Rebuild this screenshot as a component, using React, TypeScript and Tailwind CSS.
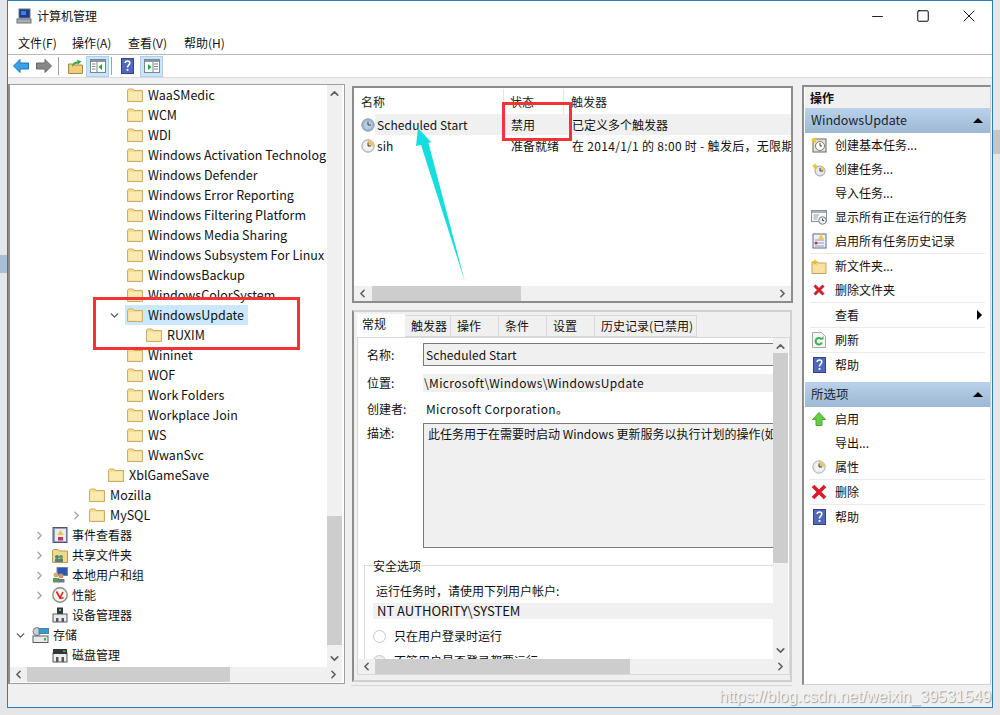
import { ChevronDown, ChevronRight, ChevronUp, ChevronLeft, Minus, Square, X } from "lucide-react";
import type { ReactNode } from "react";

const FONT = "[font-family:'Noto_Sans_CJK_SC','Noto_Sans',sans-serif]";

function Folder() {
  return (
    <svg width="16" height="14" viewBox="0 0 16 14" className="shrink-0">
      <path d="M0.5 2.5 L1.5 1 H6 L7 2.5 H15.5 V13.5 H0.5 Z" fill="#f8dc8e" stroke="#c9ad6c" />
      <path d="M1.5 4 H14.5 V12.5 H1.5 Z" fill="#fbeab0" />
    </svg>
  );
}

function Clock({ face = "#9bb7d2", rim = "#8a9aa8", wedge = false }: { face?: string; rim?: string; wedge?: boolean }) {
  return (
    <svg width="14" height="14" viewBox="0 0 14 14" className="shrink-0">
      <circle cx="7" cy="7" r="6.2" fill={face} stroke={rim} />
      <circle cx="7" cy="7" r="4" fill={wedge ? "#f2f2f2" : "#b8cde0"} />
      {wedge && <path d="M7 1 A6 6 0 0 1 13 7 H7 Z" fill="#e8c878" />}
      <path d="M7 3.5 V7 H10" fill="none" stroke="#444" />
    </svg>
  );
}

function HelpIcon() {
  return (
    <svg width="13" height="16" viewBox="0 0 13 16" className="shrink-0">
      <rect x="0" y="0" width="13" height="16" fill="#3c50a4" stroke="#2a3470" />
      <rect x="1" y="1" width="11" height="14" fill="#5068b8" />
      <path d="M4.2 5 C4.2 2.4 8.8 2.4 8.8 5 C8.8 7 6.5 7 6.5 9.5" fill="none" stroke="#fff" strokeWidth="1.6" />
      <rect x="5.6" y="11" width="1.8" height="1.8" fill="#fff" />
    </svg>
  );
}

function PaneIcon({ mirror = false }: { mirror?: boolean }) {
  return (
    <span className="w-[23px] h-[21px] flex items-center justify-center bg-[#cce4f7] border border-[#a8d2f2]">
      <svg width="16" height="14" viewBox="0 0 16 14">
        <rect x="0.5" y="0.5" width="15" height="13" fill="#fff" stroke="#7a8590" />
        <rect x="1" y="1" width="14" height="2" fill="#8a96a2" />
        {mirror ? (
          <>
            <path d="M4 5 L7.5 8 L4 11 Z" fill="#30a030" />
            <path d="M10 5 H14 M10 7.5 H14 M10 10 H14" stroke="#7a8590" />
            <path d="M9 3 V13" stroke="#7a8590" />
          </>
        ) : (
          <>
            <path d="M12 5 L8.5 8 L12 11 Z" fill="#30a030" />
            <path d="M2 5 H5.5 M2 7.5 H5.5 M2 10 H5.5" stroke="#7a8590" />
            <path d="M7 3 V13" stroke="#7a8590" />
          </>
        )}
      </svg>
    </span>
  );
}

function ComputerIcon() {
  return (
    <svg width="16" height="16" viewBox="0 0 16 16" className="shrink-0">
      <rect x="3" y="1" width="11" height="9" fill="#1d3a8a" stroke="#6a7480" />
      <rect x="5" y="3" width="5" height="4" fill="#3f7fe0" />
      <rect x="1" y="11" width="14" height="4" fill="#a8aeb4" stroke="#6a7480" />
    </svg>
  );
}

function DriveIcon({ led = "#40c040" }: { led?: string }) {
  return (
    <svg width="16" height="16" viewBox="0 0 16 16" className="shrink-0">
      <rect x="1" y="6" width="14" height="9" fill="#eceef0" stroke="#55595e" />
      <rect x="1" y="2" width="14" height="5" fill="#33373c" />
      <rect x="11" y="3.5" width="2.5" height="1.5" fill={led} />
      <rect x="4" y="10" width="2.5" height="5" fill="#55595e" />
      <rect x="9.5" y="10" width="2.5" height="5" fill="#55595e" />
    </svg>
  );
}

function TreeGlyph({ kind }: { kind: string }) {
  if (kind === "event")
    return (
      <svg width="16" height="16" viewBox="0 0 16 16" className="shrink-0">
        <rect x="1" y="0.5" width="14" height="15" fill="#8f9ec4" stroke="#4a5570" />
        <rect x="3" y="2" width="11" height="12" fill="#e8ecf4" />
        <path d="M8.5 3 L11.5 8 H5.5 Z" fill="#f2c530" />
        <rect x="6" y="10" width="5" height="3.5" fill="#c8324a" />
      </svg>
    );
  if (kind === "share")
    return (
      <svg width="16" height="15" viewBox="0 0 16 15" className="shrink-0">
        <path d="M0.5 3 L1.5 1.5 H6 L7 3 H15.5 V14.5 H0.5 Z" fill="#f3d88c" stroke="#b59a5c" />
        <circle cx="5" cy="9" r="2" fill="#4a7f9e" />
        <circle cx="9" cy="9" r="2" fill="#5a9a5a" />
        <rect x="3" y="11" width="8" height="3" fill="#5a7f70" />
      </svg>
    );
  if (kind === "users")
    return (
      <svg width="16" height="16" viewBox="0 0 16 16" className="shrink-0">
        <rect x="5" y="0.5" width="10.5" height="8" fill="#2a58b8" stroke="#7a8590" />
        <circle cx="4" cy="8" r="2.5" fill="#d8a878" />
        <rect x="1" y="11" width="6" height="4.5" fill="#5a9a5a" />
        <circle cx="9" cy="9" r="2.5" fill="#c89868" />
        <rect x="6.5" y="12" width="6" height="3.5" fill="#6a7890" />
      </svg>
    );
  if (kind === "perf")
    return (
      <svg width="16" height="16" viewBox="0 0 16 16" className="shrink-0">
        <circle cx="8" cy="8" r="7.2" fill="#f4f4ef" stroke="#8d8d85" strokeWidth="1.4" />
        <path d="M4.5 4.5 L8 11 L11 5 M8 11 L11.5 11" fill="none" stroke="#d82020" strokeWidth="1.6" />
      </svg>
    );
  if (kind === "device")
    return (
      <svg width="16" height="16" viewBox="0 0 16 16" className="shrink-0">
        <rect x="5" y="0.5" width="6" height="7" fill="#33373c" />
        <rect x="7" y="2" width="2" height="2" fill="#50c050" />
        <rect x="1" y="7" width="14" height="8" fill="#e8eaec" stroke="#55595e" />
        <rect x="4" y="11" width="2.5" height="4" fill="#55595e" />
        <rect x="9.5" y="11" width="2.5" height="4" fill="#55595e" />
      </svg>
    );
  if (kind === "store")
    return (
      <svg width="17" height="16" viewBox="0 0 17 16" className="shrink-0">
        <circle cx="5" cy="4.5" r="4" fill="#c8ced4" stroke="#7a8088" />
        <rect x="7" y="1.5" width="9.5" height="5" fill="#2f9ed0" stroke="#5a7a90" />
        <rect x="1" y="9" width="15" height="6.5" fill="#e8eaec" stroke="#5a5e64" />
        <rect x="12" y="11" width="2" height="2.5" fill="#40b040" />
      </svg>
    );
  return <DriveIcon />;
}

// x is the folder / icon position on the page, ax the chevron's
type TreeRow = { label: string; x: number; arrow?: "right" | "down"; icon?: string; selected?: boolean; ax?: number };

const treeRows: TreeRow[] = [
  { label: "WaaSMedic", x: 127 },
  { label: "WCM", x: 127 },
  { label: "WDI", x: 127 },
  { label: "Windows Activation Technolog", x: 127 },
  { label: "Windows Defender", x: 127 },
  { label: "Windows Error Reporting", x: 127 },
  { label: "Windows Filtering Platform", x: 127 },
  { label: "Windows Media Sharing", x: 127 },
  { label: "Windows Subsystem For Linux", x: 127 },
  { label: "WindowsBackup", x: 127 },
  { label: "WindowsColorSystem", x: 127 },
  { label: "WindowsUpdate", x: 127, arrow: "down", selected: true, ax: 109 },
  { label: "RUXIM", x: 146 },
  { label: "Wininet", x: 127 },
  { label: "WOF", x: 127 },
  { label: "Work Folders", x: 127 },
  { label: "Workplace Join", x: 127 },
  { label: "WS", x: 127 },
  { label: "WwanSvc", x: 127 },
  { label: "XblGameSave", x: 108 },
  { label: "Mozilla", x: 89 },
  { label: "MySQL", x: 89, arrow: "right", ax: 71 },
  { label: "事件查看器", x: 52, arrow: "right", icon: "event", ax: 34 },
  { label: "共享文件夹", x: 52, arrow: "right", icon: "share", ax: 34 },
  { label: "本地用户和组", x: 52, arrow: "right", icon: "users", ax: 34 },
  { label: "性能", x: 52, arrow: "right", icon: "perf", ax: 34 },
  { label: "设备管理器", x: 52, icon: "device" },
  { label: "存储", x: 32, arrow: "down", icon: "store", ax: 15 },
  { label: "磁盘管理", x: 52, icon: "disk" },
];

function Row({ row }: { row: TreeRow }) {
  return (
    <div className="relative h-5 flex items-center" style={{ paddingLeft: row.x - 12 }}>
      {row.arrow === "right" && (
        <ChevronRight size={13} strokeWidth={2.5} className="absolute text-[#a6a6a6]" style={{ left: (row.ax ?? 0) - 11 }} />
      )}
      {row.arrow === "down" && (
        <ChevronDown size={13} strokeWidth={2.5} className="absolute text-[#595959]" style={{ left: (row.ax ?? 0) - 11 }} />
      )}
      <div className={`flex items-center h-5 pl-[2px] pr-[4px] ${row.selected ? "bg-[#cce8ff]" : ""}`}>
        {row.icon ? <TreeGlyph kind={row.icon} /> : <Folder />}
        <span className={`whitespace-nowrap text-[#111] leading-5 ${row.icon ? "ml-[4px] text-[12px]" : "ml-[5px] text-[12.5px]"}`}>
          {row.label}
        </span>
      </div>
    </div>
  );
}

function VBar({ thumbTop, thumbH }: { thumbTop: number; thumbH: number }) {
  return (
    <div className="relative w-[15px] h-full bg-[#f0f0f0] shrink-0">
      <ChevronUp size={13} strokeWidth={3} className="absolute left-[1px] top-[2px] text-[#606060]" />
      <div className="absolute left-0 w-[15px] bg-[#cdcdcd]" style={{ top: thumbTop, height: thumbH }} />
      <ChevronDown size={13} strokeWidth={3} className="absolute left-[1px] bottom-[2px] text-[#606060]" />
    </div>
  );
}

function HBar({ thumbLeft, thumbW }: { thumbLeft: number; thumbW: number }) {
  return (
    <div className="relative h-[15px] bg-[#f0f0f0] shrink-0">
      <ChevronLeft size={13} strokeWidth={3} className="absolute left-[2px] top-[1px] text-[#606060]" />
      <div className="absolute top-0 h-[15px] bg-[#cdcdcd]" style={{ left: thumbLeft, width: thumbW }} />
      <ChevronRight size={13} strokeWidth={3} className="absolute right-[2px] top-[1px] text-[#606060]" />
    </div>
  );
}

type Action = { label: string; icon?: ReactNode; line?: boolean; more?: boolean };

const actionsA: Action[] = [
  {
    label: "创建基本任务...",
    icon: (
      <svg width="16" height="16" viewBox="0 0 16 16">
        <rect x="2" y="2" width="13" height="13" fill="#e8e4d8" stroke="#6a6a60" />
        <circle cx="9" cy="9" r="4.5" fill="#fff" stroke="#7a7a70" />
        <path d="M9 6 V9 H11" fill="none" stroke="#444" />
        <path d="M3 0 L4.2 2 L6.5 2.4 L4.6 4 L5 6 L3 5 L1 6 L1.4 4 L0 2.4 L1.8 2 Z" fill="#f2c530" />
      </svg>
    ),
  },
  {
    label: "创建任务...",
    icon: (
      <svg width="16" height="16" viewBox="0 0 16 16">
        <circle cx="9" cy="10" r="5" fill="#e4e8ec" stroke="#9aa0a8" />
        <path d="M9 5 A5 5 0 0 1 14 10 H9 Z" fill="#eccb80" />
        <path d="M9 7 V10 H12" fill="none" stroke="#444" />
        <path d="M4 2 L5 4 L7 4.4 L5.4 5.8 L5.8 8 L4 7 L2.2 8 L2.6 5.8 L1 4.4 L3 4 Z" fill="#f2c530" />
      </svg>
    ),
  },
  { label: "导入任务..." },
  {
    label: "显示所有正在运行的任务",
    icon: (
      <svg width="16" height="16" viewBox="0 0 16 16">
        <rect x="0.5" y="1.5" width="15" height="11" fill="#f4f6f8" stroke="#8a929a" />
        <rect x="1" y="2" width="14" height="2" fill="#a8b0b8" />
        <path d="M2.5 6 H8 M2.5 8 H7 M2.5 10 H6" stroke="#9aa0a8" />
        <circle cx="11.5" cy="11.5" r="3.8" fill="#e8ecf0" stroke="#7a8088" />
        <path d="M11.5 9.5 V11.5 H13" fill="none" stroke="#444" />
      </svg>
    ),
  },
  {
    label: "启用所有任务历史记录",
    line: true,
    icon: (
      <svg width="16" height="16" viewBox="0 0 16 16">
        <rect x="2" y="1" width="13" height="14" fill="#eef2f8" stroke="#5a6890" />
        <path d="M4 7 H13 M4 10 H13 M4 13 H13" stroke="#8a9ab8" />
        <path d="M10 1 L13 6 H7 Z" fill="#f2d030" />
        <circle cx="5" cy="10" r="1.6" fill="#d03040" />
      </svg>
    ),
  },
  {
    label: "新文件夹...",
    icon: (
      <svg width="16" height="15" viewBox="0 0 16 15">
        <path d="M1 3 H6 L7 4 H15 V14.5 H1 Z" fill="#f8e0a0" stroke="#c0a468" />
        <path d="M4 0 L5 2 L7.2 2.4 L5.5 4 L6 6 L4 5 L2 6 L2.5 4 L0.8 2.4 L3 2 Z" fill="#f2bc20" />
      </svg>
    ),
  },
  {
    label: "删除文件夹",
    line: true,
    icon: (
      <svg width="14" height="14" viewBox="0 0 14 14">
        <path d="M2.5 2.5 L11.5 11.5 M11.5 2.5 L2.5 11.5" stroke="#d02030" strokeWidth="3" />
      </svg>
    ),
  },
  { label: "查看", more: true, line: true },
  {
    label: "刷新",
    line: true,
    icon: (
      <svg width="14" height="16" viewBox="0 0 14 16">
        <path d="M0.5 0.5 H9.5 L13.5 4.5 V15.5 H0.5 Z" fill="#f6f6f6" stroke="#a8a8a8" />
        <path d="M9.5 7.5 A3.2 3.2 0 1 0 9.8 10.5" fill="none" stroke="#40b050" strokeWidth="2" />
        <path d="M8 7.5 H11.5 V4 Z" fill="#40b050" />
      </svg>
    ),
  },
  { label: "帮助", icon: <HelpIcon /> },
];

const actionsB: Action[] = [
  {
    label: "启用",
    icon: (
      <svg width="14" height="14" viewBox="0 0 14 14">
        <path d="M7 0.5 L13.5 7.5 H10 V13.5 H4 V7.5 H0.5 Z" fill="#60d040" stroke="#50a040" />
      </svg>
    ),
  },
  { label: "导出..." },
  {
    label: "属性",
    line: true,
    icon: <Clock face="#e8ecf0" rim="#a8b0b8" wedge />,
  },
  {
    label: "删除",
    line: true,
    icon: (
      <svg width="16" height="16" viewBox="0 0 16 16">
        <path d="M2 2 L14 14 M14 2 L2 14" stroke="#e01828" strokeWidth="3.6" />
      </svg>
    ),
  },
  { label: "帮助", icon: <HelpIcon /> },
];

function ActionRow({ item }: { item: Action }) {
  return (
    <div className={`shrink-0 ${item.line ? "h-[25px]" : "h-[24px]"}`}>
      <div className="relative h-[24px] flex items-center pl-[6px]">
        <span className="w-[16px] flex justify-center shrink-0">{item.icon}</span>
        <span className="ml-[8px] text-[12px] text-[#111] leading-5">{item.label}</span>
        {item.more && <span className="absolute right-[8px] w-0 h-0 border-y-[5px] border-y-transparent border-l-[5px] border-l-black" />}
      </div>
      {item.line && <div className="h-px mx-[5px] bg-[#eaeaea]" />}
    </div>
  );
}

function ActionHead({ label }: { label: string }) {
  return (
    <div className="h-[25px] shrink-0 flex items-center justify-between pl-[6px] pr-[7px] bg-gradient-to-b from-[#bad2ea] to-[#9db8d4] text-[12.5px] text-[#1a2430]">
      <span>{label}</span>
      <span className="w-0 h-0 border-x-[5px] border-x-transparent border-b-[5px] border-b-black" />
    </div>
  );
}

const tabs = [
  { label: "触发器", w: 46 },
  { label: "操作", w: 48 },
  { label: "条件", w: 48 },
  { label: "设置", w: 48 },
  { label: "历史记录(已禁用)", w: 102 },
];

function Label({ children }: { children: ReactNode }) {
  return <span className="w-[56px] shrink-0 text-[12px] leading-5 text-[#111]">{children}</span>;
}

export default function App() {
  return (
    <div className={`relative w-[1000px] h-[715px] overflow-hidden bg-[#e6e6e6] ${FONT}`}>
      {/* bits of the windows behind */}
      <div className="absolute left-0 top-[255px] w-[7px] h-[18px] bg-[#a9bfd6]" />
      <div className="absolute left-[993px] top-[130px] w-[7px] h-[24px] bg-[#c6c6c6]" />

      <div className="relative w-[986px] h-[708px] ml-[7px] border border-[#2a7cc0] bg-[#f0f0f0] flex flex-col">
        {/* title */}
        <div className="h-[30px] bg-white flex items-center shrink-0 relative pl-[8px]">
          <ComputerIcon />
          <span className="ml-[5px] text-[12px] text-[#111]">计算机管理</span>
          <div className="absolute right-0 top-0 h-[30px] flex items-center">
            <span className="w-[46px] flex justify-center"><Minus size={17} strokeWidth={1.2} className="text-black" /></span>
            <span className="w-[46px] flex justify-center"><Square size={14} strokeWidth={1.7} className="text-black" /></span>
            <span className="w-[46px] flex justify-center"><X size={20} strokeWidth={1.1} className="text-black" /></span>
          </div>
        </div>
        {/* menu */}
        <div className="h-[24px] bg-white border-b border-[#b9b9b9] flex items-center pl-[10px] gap-[16px] text-[12px] text-[#111] shrink-0">
          <span className="w-[38px] whitespace-nowrap">文件(F)</span>
          <span className="w-[40px] whitespace-nowrap">操作(A)</span>
          <span className="w-[40px] whitespace-nowrap">查看(V)</span>
          <span className="w-[40px] whitespace-nowrap">帮助(H)</span>
        </div>
        {/* toolbar */}
        <div className="h-[23px] bg-white border-b border-[#dcdcdc] flex items-center pl-[5px] shrink-0">
          <svg width="16" height="14" viewBox="0 0 16 14">
            <path d="M0.5 7 L7 0.5 V4 H15.5 V10 H7 V13.5 Z" fill="#3aa0e8" stroke="#1f70b8" />
          </svg>
          <svg width="16" height="14" viewBox="0 0 16 14" className="ml-[7px]">
            <path d="M15.5 7 L9 0.5 V4 H0.5 V10 H9 V13.5 Z" fill="#888" stroke="#666" />
          </svg>
          <span className="w-px h-[18px] bg-[#a0a0a0] ml-[6px]" />
          <svg width="15" height="15" viewBox="0 0 15 15" className="ml-[9px]">
            <path d="M0.5 5 H5 L6 6 H14.5 V14.5 H0.5 Z" fill="#f0cf78" stroke="#a88a48" />
            <path d="M4 8 C4 4 7 2.5 10 2.5 L8.5 0.5 L13.5 2.5 L9.5 6 L10 4.5 C7.5 4.5 5.5 6 4 8 Z" fill="#3aa040" />
          </svg>
          <span className="ml-[3px]"><PaneIcon /></span>
          <span className="w-px h-[18px] bg-[#a0a0a0] ml-[2px]" />
          <span className="ml-[9px]"><HelpIcon /></span>
          <span className="ml-[6px]"><PaneIcon mirror /></span>
        </div>

        {/* panes */}
        <div className="flex-1 min-h-0 flex">
          {/* tree */}
          <div className="w-[337px] mt-[6px] h-[600px] border border-[#a0a0a0] border-l-[2px] border-l-[#8c8c8c] bg-white flex flex-col shrink-0">
            <div className="flex-1 min-h-0 flex pr-[2px]">
              <div className="flex-1 min-w-0 overflow-hidden">
                {treeRows.map((r) => (
                  <Row key={r.label} row={r} />
                ))}
              </div>
              <VBar thumbTop={431} thumbH={129} />
            </div>
            <div className="pr-[2px] pb-[1px]">
              <HBar thumbLeft={17} thumbW={203} />
            </div>
          </div>

          {/* middle */}
          <div className="w-[442px] ml-[6px] mt-[8px] flex flex-col shrink-0">
            <div className="h-[217px] ml-[1px] border-2 border-[#8c8c8c] bg-white flex flex-col shrink-0">
              <div className="h-[26px] pt-[1px] flex items-center text-[12px] text-[#222] shrink-0">
                <span className="w-[150px] pl-[7px] h-full flex items-center border-r border-[#e5e5e5]">名称</span>
                <span className="w-[60px] pl-[6px] h-full flex items-center border-r border-[#e5e5e5]">状态</span>
                <span className="pl-[7px]">触发器</span>
              </div>
              <div className="flex-1 min-h-0 overflow-hidden text-[12px] text-[#111]">
                <div className="h-[21px] flex items-center">
                  <span className="w-[21px] pl-[7px] shrink-0 bg-white h-full flex items-center"><Clock /></span>
                  <div className="flex-1 bg-[#f0f0f0] h-full flex items-center whitespace-nowrap">
                    <span className="w-[130px] pl-[2px] tracking-[0.1px]">Scheduled Start</span>
                    <span className="w-[60px] pl-[6px]">禁用</span>
                    <span className="pl-[7px]">已定义多个触发器</span>
                  </div>
                </div>
                <div className="h-[21px] flex items-center whitespace-nowrap">
                  <span className="w-[21px] pl-[7px] shrink-0 flex items-center"><Clock face="#e8e8e8" rim="#a0a0a0" wedge /></span>
                  <span className="w-[130px] pl-[2px] tracking-[0.1px] shrink-0">sih</span>
                  <span className="w-[60px] pl-[6px] shrink-0">准备就绪</span>
                  <span className="pl-[7px] tracking-[0.3px]">在 2014/1/1 的 8:00 时 - 触发后，无限期</span>
                </div>
              </div>
              <HBar thumbLeft={18} thumbW={149} />
            </div>

            {/* detail */}
            <div className="mt-[7px] ml-[1px] w-[440px] h-[372px] border-2 border-[#d0d0d0] border-l-[#8c8c8c] pt-[2px] pl-[3px] pb-[5px] flex flex-col shrink-0 overflow-hidden">
              <div className="h-[23px] flex items-end shrink-0 text-[12px] text-[#111]">
                <span className="w-[48px] h-[23px] bg-white pl-[5px] pb-[4px] flex items-center">常规</span>
                {tabs.map((t) => (
                  <span
                    key={t.label}
                    className="h-[22px] pl-[6px] bg-[#f0f0f0] border border-[#d9d9d9] border-l-0 flex items-center whitespace-nowrap"
                    style={{ width: t.w }}
                  >
                    {t.label}
                  </span>
                ))}
              </div>
              <div className="flex-1 min-h-0 bg-white border border-[#d9d9d9] flex flex-col">
                <div className="flex-1 min-h-0 flex pr-px">
                  <div className="flex-1 min-w-0 overflow-hidden text-[12px] text-[#111] pl-[9px] whitespace-nowrap">
                    <div className="flex items-center mt-[5px] h-[23px]">
                      <Label>名称:</Label>
                      <div className="flex-1 h-[23px] bg-[#f0f0f0] border border-r-0 border-[#7a7a7a] pl-[2px] flex items-center tracking-[0.1px]">Scheduled Start</div>
                    </div>
                    <div className="flex items-center mt-[8px] h-[18px]">
                      <Label>位置:</Label>
                      <div className="flex-1 h-[18px] bg-[#f0f0f0] pl-px flex items-center tracking-[0.35px]">\Microsoft\Windows\WindowsUpdate</div>
                    </div>
                    <div className="flex items-center mt-[8px] h-[18px]">
                      <Label>创建者:</Label>
                      <div className="pl-[3px] tracking-[0.35px]">Microsoft Corporation。</div>
                    </div>
                    <div className="flex mt-[5px]">
                      <Label>描述:</Label>
                      <div className="flex-1 h-[125px] bg-[#f0f0f0] border border-r-0 border-[#7a7a7a] pl-[4px] pt-[1px] overflow-hidden">
                        此任务用于在需要时启动 Windows 更新服务以执行计划的操作(如
                      </div>
                    </div>
                    <div className="relative mt-[17px] -ml-[3px] border border-r-0 border-b-0 border-[#dcdcdc] h-[200px] pl-[8px]">
                      <span className="absolute -top-[10px] left-[8px] bg-white leading-5">安全选项</span>
                      <div className="pt-[15px] pl-[3px] h-[20px] box-content leading-5">运行任务时，请使用下列用户帐户:</div>
                      <div className="h-[16px] mt-[2px] bg-[#f0f0f0] flex items-center pl-[4px] text-[13px]">NT AUTHORITY\SYSTEM</div>
                      <div className="flex items-center h-[20px] mt-[7px]">
                        <span className="w-[13px] h-[13px] rounded-full border border-[#c8c8c8] bg-white" />
                        <span className="ml-[8px]">只在用户登录时运行</span>
                      </div>
                      <div className="flex items-center h-[20px] mt-[5px]">
                        <span className="w-[13px] h-[13px] rounded-full border border-[#c8c8c8] bg-[#f0f0f0]" />
                        <span className="ml-[8px]">不管用户是否登录都要运行</span>
                      </div>
                    </div>
                  </div>
                  <VBar thumbTop={15} thumbH={210} />
                </div>
                <HBar thumbLeft={17} thumbW={255} />
              </div>
            </div>
            <div className="mt-[3px] mr-[1px] h-px bg-[#d8d8d8] shrink-0" />
          </div>

          {/* actions */}
          <div className="w-[189px] ml-[9px] mt-[7px] h-[600px] border-l-2 border-t-2 border-[#8c8c8c] border-r border-r-[#d0d0d0] border-b border-b-[#d0d0d0] bg-white flex flex-col shrink-0 pl-[1px]">
            <div className="h-[21px] bg-[#f0f0f0] pl-[5px] text-[12px] font-bold text-[#111] flex items-center shrink-0">操作</div>
            <ActionHead label="WindowsUpdate" />
            {actionsA.map((a) => (
              <ActionRow key={a.label} item={a} />
            ))}
            <div className="h-[5px] shrink-0" />
            <ActionHead label="所选项" />
            {actionsB.map((a) => (
              <ActionRow key={a.label} item={a} />
            ))}
          </div>
        </div>
      </div>

      {/* annotations lying over the screenshot */}
      <div className="absolute left-[93px] top-[297px] w-[207px] h-[53px] border-[3px] border-[#f53337]" />
      <div className="absolute left-[502px] top-[102px] w-[70px] h-[39px] border-[3px] border-[#f53337]" />
      <svg className="absolute left-[410px] top-[125px]" width="60" height="160" viewBox="0 0 60 160">
        <path d="M8 3 L21 17 L18.5 18 L55 157 L11 20 L6 21 Z" fill="#17dede" />
      </svg>
      <span className="absolute left-[719px] top-[683px] text-[16px] leading-7 whitespace-nowrap text-[#f4f4f4] [font-family:'Liberation_Sans',sans-serif] [text-shadow:1px_1px_1px_#9a9a9a]">
        https://blog.csdn.net/weixin_39531549
      </span>
    </div>
  );
}
